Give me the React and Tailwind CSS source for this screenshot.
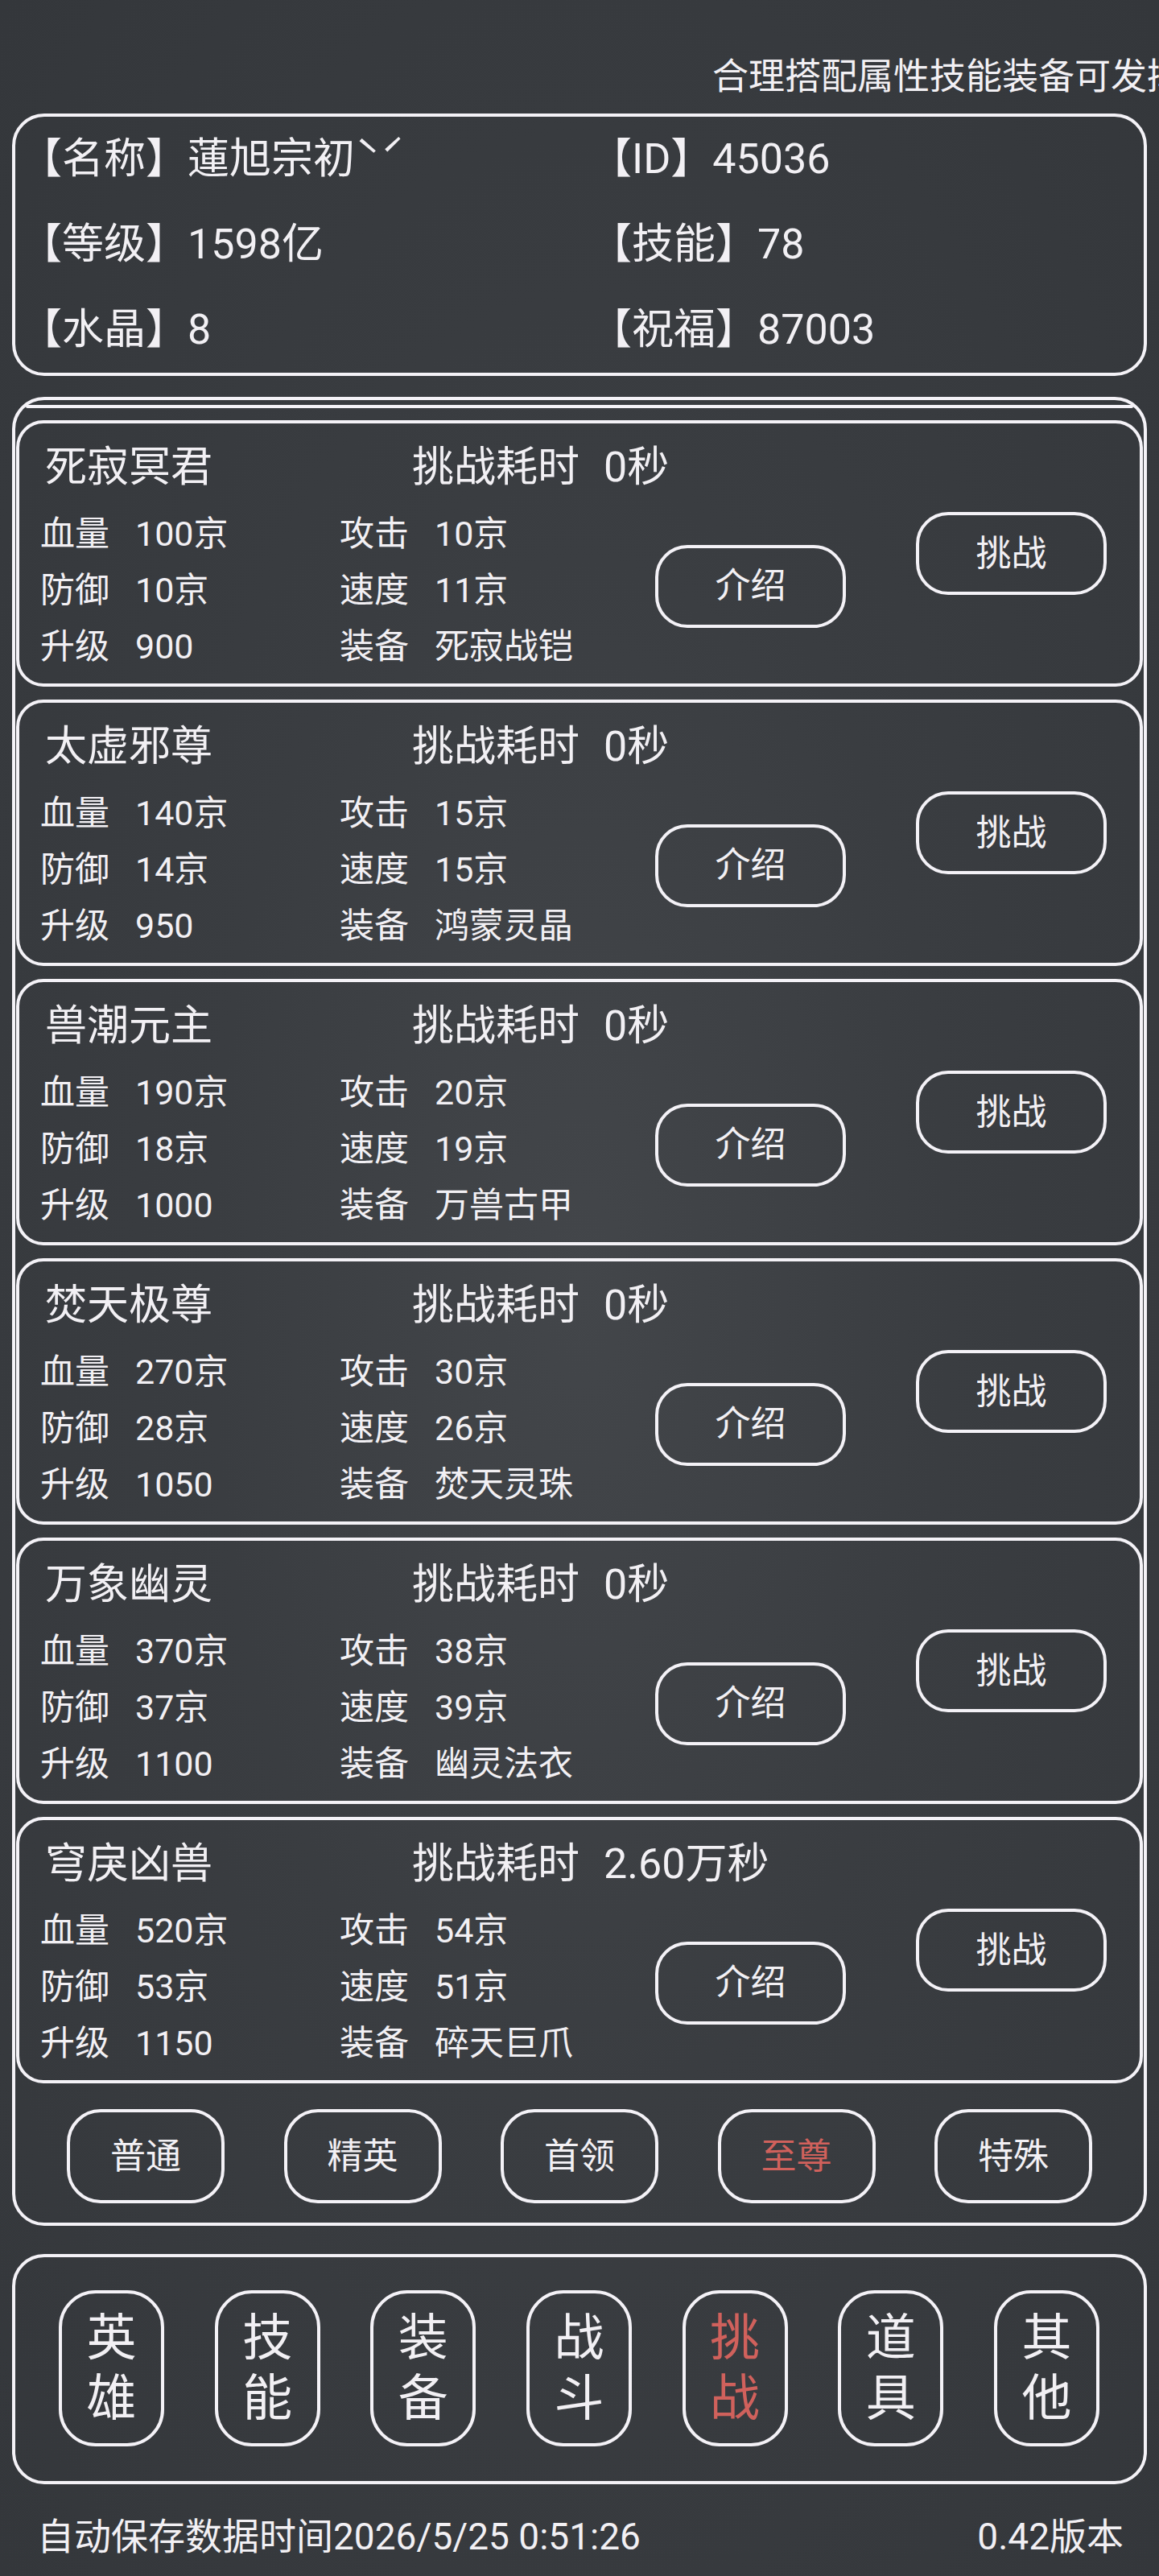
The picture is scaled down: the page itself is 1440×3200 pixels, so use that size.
import React from 'react'

const info = [
  ['【名称】', '蓮旭宗初ˋˊ', '【ID】', '45036'],
  ['【等级】', '1598亿', '【技能】', '78'],
  ['【水晶】', '8', '【祝福】', '87003'],
]

const bosses = [
  { name: '死寂冥君', time: '0秒', hp: '100京', atk: '10京', def: '10京', spd: '11京', lv: '900', eq: '死寂战铠' },
  { name: '太虚邪尊', time: '0秒', hp: '140京', atk: '15京', def: '14京', spd: '15京', lv: '950', eq: '鸿蒙灵晶' },
  { name: '兽潮元主', time: '0秒', hp: '190京', atk: '20京', def: '18京', spd: '19京', lv: '1000', eq: '万兽古甲' },
  { name: '焚天极尊', time: '0秒', hp: '270京', atk: '30京', def: '28京', spd: '26京', lv: '1050', eq: '焚天灵珠' },
  { name: '万象幽灵', time: '0秒', hp: '370京', atk: '38京', def: '37京', spd: '39京', lv: '1100', eq: '幽灵法衣' },
  { name: '穹戾凶兽', time: '2.60万秒', hp: '520京', atk: '54京', def: '53京', spd: '51京', lv: '1150', eq: '碎天巨爪' },
]

const tabs = ['普通', '精英', '首领', '至尊', '特殊']
const navs = [['英', '雄'], ['技', '能'], ['装', '备'], ['战', '斗'], ['挑', '战'], ['道', '具'], ['其', '他']]

const Stat = ({ label, value }) => (
  <div className="flex h-[70px] items-center">
    <span className="w-[118px]">{label}</span>
    <span>{value}</span>
  </div>
)

const BossCard = ({ b }) => {
  return (
    <div className="flex h-[331px] rounded-[34px] border-4 border-[#f4f2f7] pl-[26px]">
      <div className="flex w-[1001px] flex-col pt-[20px]">
        <div className="flex h-[70px] items-center text-[52px]">
          <span className="w-[462px] pl-[6px]">{b.name}</span>
          <span>挑战耗时</span>
          <span className="ml-[30px]">{b.time}</span>
        </div>
        <div className="mt-[12px] flex items-center text-[43px]">
          <div className="grid grid-cols-[372px_392px]">
            <Stat label="血量" value={b.hp} />
            <Stat label="攻击" value={b.atk} />
            <Stat label="防御" value={b.def} />
            <Stat label="速度" value={b.spd} />
            <Stat label="升级" value={b.lv} />
            <Stat label="装备" value={b.eq} />
          </div>
          <button className="mb-[10px] flex h-[103px] w-[237px] items-center justify-center rounded-[40px] border-4 border-[#f4f2f7] text-[44px]">
            介绍
          </button>
        </div>
      </div>
      <button className="ml-[87px] flex h-[103px] w-[237px] items-center justify-center self-center rounded-[40px] border-4 border-[#f4f2f7] text-[44px]">
        挑战
      </button>
    </div>
  )
}

export default function App() {
  return (
    <div
      className="min-h-[3200px] w-[1440px] overflow-hidden bg-[radial-gradient(ellipse_at_center,#43464a_0%,#3a3d41_45%,#34373b_100%)] text-[#f2f0f4]"
      style={{ fontFamily: 'Roboto, "Noto Sans CJK SC", "Noto Sans", sans-serif' }}
    >
      <div className="overflow-hidden whitespace-nowrap pl-[885px] pt-[62px] text-[45px] leading-[68px]">
        合理搭配属性技能装备可发挥最大战力
      </div>

      <div className="mx-[15px] mt-[11px] rounded-[40px] border-4 border-[#f4f2f7] pl-[6px] text-[52px]">
        {info.map((row) => (
          <div key={row[0]} className="grid h-[106px] grid-cols-[708px_1fr] items-center">
            <div>{row[0]}{row[1]}</div>
            <div>{row[2]}{row[3]}</div>
          </div>
        ))}
      </div>

      <div className="mx-[15px] mt-[26px] rounded-[40px] border-4 border-[#f4f2f7] px-[1px] pb-[24px]">
        <div className="mx-[12px] mt-[6px] h-[4px] rounded-full bg-[#f4f2f7]" />
        <div className="mt-[15px] flex flex-col gap-[16px]">
          {bosses.map((b) => (
            <BossCard key={b.name} b={b} />
          ))}
        </div>
        <div className="mt-[32px] flex justify-between px-[63px]">
          {tabs.map((t) => (
            <button
              key={t}
              className={`flex h-[117px] w-[196px] items-center justify-center rounded-[42px] border-4 border-[#f4f2f7] text-[44px] ${t === '至尊' ? 'text-[#d0615c]' : ''}`}
            >
              {t}
            </button>
          ))}
        </div>
      </div>

      <div className="mx-[15px] mt-[35px] flex justify-between rounded-[40px] border-4 border-[#f4f2f7] pb-[43px] pl-[54px] pr-[55px] pt-[41px]">
        {navs.map((n) => (
          <button
            key={n[0]}
            className={`flex h-[194px] w-[131px] flex-col items-center justify-center rounded-[46px] border-4 border-[#f4f2f7] text-[62px] leading-[75px] ${n[0] === '挑' ? 'text-[#d0615c]' : ''}`}
          >
            <span>{n[0]}</span>
            <span>{n[1]}</span>
          </button>
        ))}
      </div>

      <div className="mt-[35px] flex justify-between pl-[46px] pr-[44px] text-[46px] leading-[60px]">
        <span>自动保存数据时间2026/5/25 0:51:26</span>
        <span>0.42版本</span>
      </div>
    </div>
  )
}
